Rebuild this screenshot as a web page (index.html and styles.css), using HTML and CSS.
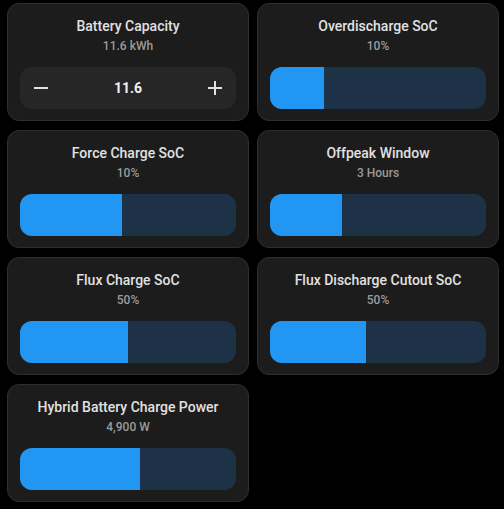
FILE: index.html
```html
<!DOCTYPE html>
<html>
<head>
<meta charset="utf-8">
<link rel="stylesheet" href="styles.css">
</head>
<body>
<div class="grid">
  <div class="card">
    <div class="title">Battery Capacity</div>
    <div class="value">11.6 kWh</div>
    <div class="stepper">
      <svg class="icon" viewBox="0 0 24 24"><path d="M19,13H5V11H19V13Z"/></svg>
      <span class="num">11.6</span>
      <svg class="icon" viewBox="0 0 24 24"><path d="M19,13H13V19H11V13H5V11H11V5H13V11H19V13Z"/></svg>
    </div>
  </div>
  <div class="card">
    <div class="title">Overdischarge SoC</div>
    <div class="value">10%</div>
    <div class="bar"><div class="fill" style="width:54px"></div></div>
  </div>
  <div class="card">
    <div class="title">Force Charge SoC</div>
    <div class="value">10%</div>
    <div class="bar"><div class="fill" style="width:102px"></div></div>
  </div>
  <div class="card">
    <div class="title">Offpeak Window</div>
    <div class="value">3 Hours</div>
    <div class="bar"><div class="fill" style="width:72px"></div></div>
  </div>
  <div class="card">
    <div class="title">Flux Charge SoC</div>
    <div class="value">50%</div>
    <div class="bar"><div class="fill" style="width:108px"></div></div>
  </div>
  <div class="card">
    <div class="title">Flux Discharge Cutout SoC</div>
    <div class="value">50%</div>
    <div class="bar"><div class="fill" style="width:96px"></div></div>
  </div>
  <div class="card">
    <div class="title">Hybrid Battery Charge Power</div>
    <div class="value">4,900 W</div>
    <div class="bar"><div class="fill" style="width:120px"></div></div>
  </div>
</div>
</body>
</html>
```
FILE: styles.css
```css
html, body {
  margin: 0;
  padding: 0;
  background: #000;
  font-family: Roboto, "Noto Sans", sans-serif;
}
.grid {
  display: grid;
  grid-template-columns: 242px 242px;
  column-gap: 8px;
  row-gap: 9px;
  padding: 3px 5px 0 7px;
}
.card {
  background: #1c1c1c;
  border: 1px solid #2e2e2e;
  border-radius: 12px;
  padding: 12px 12px 11px;
  display: flex;
  flex-direction: column;
  align-items: stretch;
}
.title {
  font-size: 14px;
  line-height: 20px;
  font-weight: 500;
  color: #e1e1e1;
  text-align: center;
}
.value {
  margin-top: 2px;
  font-size: 12px;
  line-height: 16px;
  font-weight: 500;
  color: #9b9b9b;
  text-align: center;
}
.bar {
  margin-top: 13px;
  height: 42px;
  border-radius: 12px;
  background: #1e3247;
  overflow: hidden;
  display: flex;
}
.fill {
  height: 100%;
  background: #2196f3;
}
.stepper {
  margin-top: 13px;
  height: 42px;
  border-radius: 12px;
  background: #262626;
  display: flex;
  align-items: center;
  justify-content: space-between;
  padding: 0 9px;
}
.icon {
  width: 24px;
  height: 24px;
  fill: #e1e1e1;
}
.num {
  font-size: 14px;
  font-weight: 700;
  color: #f0f0f0;
}
```
